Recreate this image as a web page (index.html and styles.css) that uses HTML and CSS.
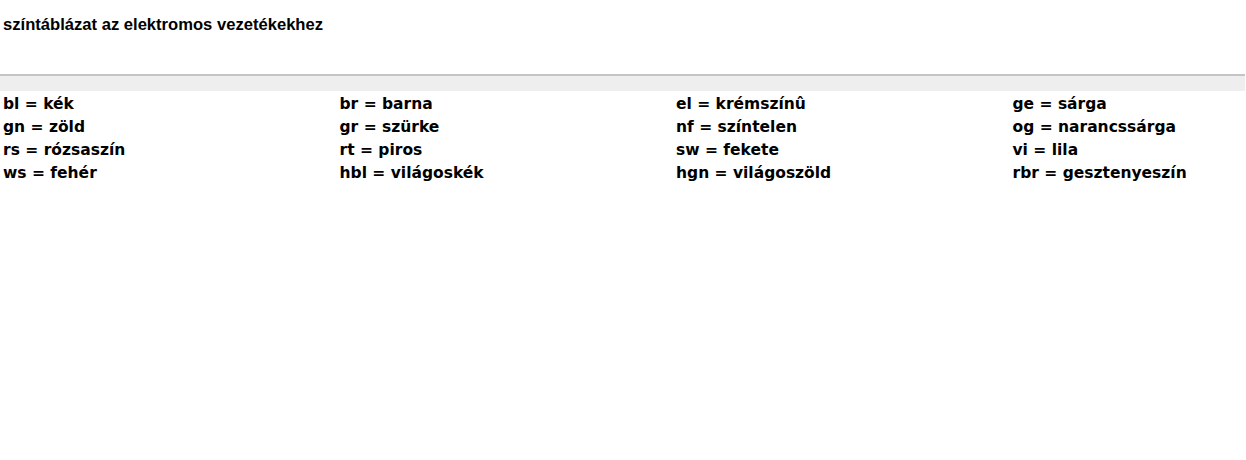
FILE: index.html
```html
<!DOCTYPE html>
<html lang="hu">
<head>
  <meta charset="UTF-8" />
  <meta name="viewport" content="width=device-width, initial-scale=1.0"/>
  <title>színtáblázat az elektromos vezetékekhez</title>
  <link rel="stylesheet" href="styles.css">
</head>
<body>
  <div class="header">
    <h1 class="title">színtáblázat az elektromos vezetékekhez</h1>
  </div>
  <div class="band"></div>

  <div class="colors">
    <div>bl = kék</div>
    <div>br = barna</div>
    <div>el = krémszínû</div>
    <div>ge = sárga</div>
    <div>gn = zöld</div>
    <div>gr = szürke</div>
    <div>nf = színtelen</div>
    <div>og = narancssárga</div>
    <div>rs = rózsaszín</div>
    <div>rt = piros</div>
    <div>sw = fekete</div>
    <div>vi = lila</div>
    <div>ws = fehér</div>
    <div>hbl = világoskék</div>
    <div>hgn = világoszöld</div>
    <div>rbr = gesztenyeszín</div>
  </div>
</body>
</html>
```

FILE: styles.css
```css
body {
  margin: 0;
  background-color: white;
  color: #000;
}

.header {
  height: 74px;
  border-bottom: 2px solid #c4c4c4;
  margin-right: 1px;
  box-sizing: border-box;
  height: 76px;
}

.title {
  margin: 0;
  padding: 15px 0 0 3px;
  font-family: "Liberation Sans", Arial, sans-serif;
  font-size: 16.6px;
  font-weight: bold;
  line-height: 19px;
}

.band {
  height: 15px;
  background-color: #eeeeee;
  margin-right: 1px;
}

.colors {
  display: grid;
  grid-template-columns: repeat(3, 336.5px) 1fr;
  padding: 2px 0 0 3px;
  font-family: "DejaVu Sans", Verdana, Tahoma, sans-serif;
  font-size: 15.5px;
  font-weight: bold;
  line-height: 23px;
  white-space: nowrap;
}
```
